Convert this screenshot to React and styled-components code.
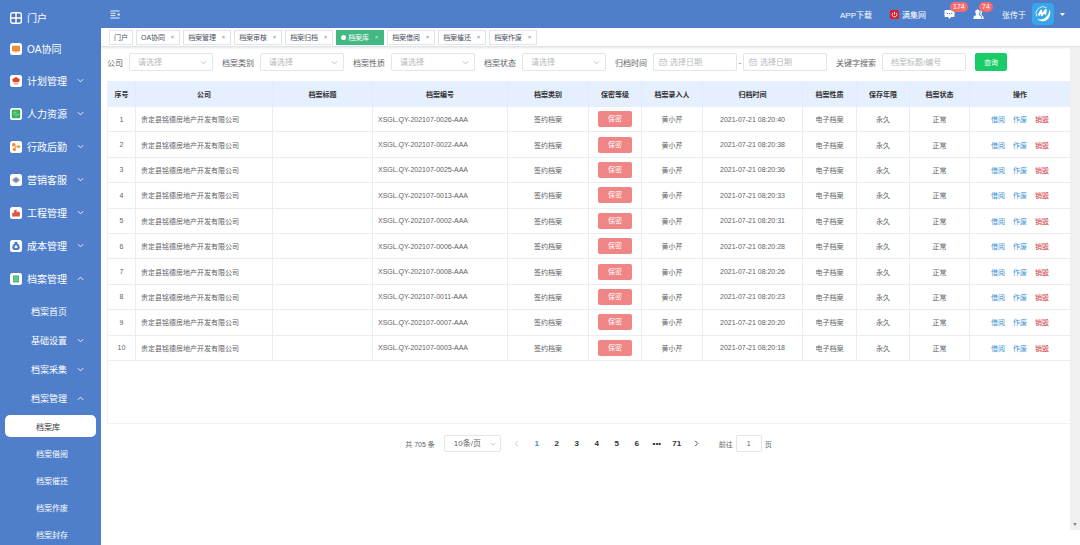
import { useState } from "react";
import styled, { createGlobalStyle } from "styled-components";

const GlobalStyle = createGlobalStyle`
  * {
    box-sizing: border-box;
    margin: 0;
    padding: 0;
  }

  body {
    font-family: "Liberation Sans", "Noto Sans CJK SC", sans-serif;
    font-size: 8px;
    color: #606266;
    background: #fff;
  }

  button, input, select {
    font: inherit;
    color: inherit;
  }

  a {
    color: inherit;
    text-decoration: none;
  }

  ul {
    list-style: none;
  }
`;

const menus = [
  { name: "门户", icon: "portal" },
  { name: "OA协同", icon: "oa" },
  { name: "计划管理", icon: "plan", children: true },
  { name: "人力资源", icon: "hr", children: true },
  { name: "行政后勤", icon: "admin", children: true },
  { name: "营销客服", icon: "sales", children: true },
  { name: "工程管理", icon: "project", children: true },
  { name: "成本管理", icon: "cost", children: true },
  { name: "档案管理", icon: "archive", children: true, open: true },
];

const subMenus = [
  { name: "档案首页" },
  { name: "基础设置", children: true },
  { name: "档案采集", children: true },
  { name: "档案管理", children: true, open: true },
];

const pages = ["档案库", "档案借阅", "档案催还", "档案作废", "档案封存"];

const tabs = [
  "门户",
  "OA协同",
  "档案管理",
  "档案审核",
  "档案归档",
  "档案库",
  "档案借阅",
  "档案催还",
  "档案作废",
];

const columns = [
  { title: "序号", width: 28 },
  { title: "公司", width: 137 },
  { title: "档案标题", width: 100 },
  { title: "档案编号", width: 135 },
  { title: "档案类别", width: 81 },
  { title: "保密等级", width: 53 },
  { title: "档案录入人", width: 61 },
  { title: "归档时间", width: 100 },
  { title: "档案性质", width: 54 },
  { title: "保存年限", width: 53 },
  { title: "档案状态", width: 60 },
  { title: "操作", width: 101 },
];

const rows = [
  ["0026", "40"],
  ["0022", "38"],
  ["0025", "36"],
  ["0013", "33"],
  ["0002", "31"],
  ["0006", "28"],
  ["0008", "26"],
  ["0011", "23"],
  ["0007", "20"],
  ["0003", "18"],
];

const menuArt = {
  oa: (
    <>
      <rect x="2" y="2.8" width="8" height="5.8" rx="1" fill="#f08c35" />
      <path d="M4.8 8.5h2.4L6 9.8z" fill="#f08c35" />
    </>
  ),
  plan: (
    <>
      <path d="M6 2 10 4.6 8.8 7H3.2L2 4.6z" fill="#e0452f" />
      <path d="M3.5 7.4h5v1.4L6 9.8 3.5 8.8z" fill="#f3a58f" />
    </>
  ),
  hr: (
    <>
      <rect x="1.8" y="1.8" width="8.4" height="8.4" rx="1" fill="#2fb55c" />
      <path d="M3.5 4.2h3M3.5 6h2M6 8.5c0-3 3-3 3-1" stroke="#a5ecbf" strokeWidth="0.8" fill="none" />
    </>
  ),
  admin: (
    <>
      <circle cx="3.8" cy="3.8" r="1.8" fill="#f08c35" />
      <circle cx="8.7" cy="5.6" r="1.6" fill="#f5a04a" />
      <circle cx="4.3" cy="8.4" r="1.6" fill="#f08c35" />
      <path d="M3.8 3.8 5.8 5.8 4.3 8.4M5.8 5.7h3" stroke="#f08c35" strokeWidth="0.9" fill="none" />
    </>
  ),
  sales: (
    <>
      <path d="M6 2.8 10.2 6 6 9.2 1.8 6z" fill="#9aa0b2" />
      <circle cx="6" cy="6" r="1.8" fill="#7d859c" />
    </>
  ),
  project: <path d="M2.2 9.5V5.8h1.9V3.6L6.6 2.2v3l2-.8 1.2 1.2v3.9z" fill="#e45340" />,
  cost: (
    <>
      <path d="M4.2 2h3.6l-.7 1.6c2 1 2.6 2.6 2.6 3.8C9.7 9.3 8.2 10 6 10S2.3 9.300 2.300 7.400c0-1.200.6-2.800 2.600-3.800z" fill="#3b78cf" />
      <circle cx="6" cy="6.8" r="1.5" fill="#fff" />
    </>
  ),
  archive: (
    <>
      <rect x="3" y="2.5" width="6" height="7" fill="#49b982" />
      <path d="M4.2 4.5h3.600M4.200 6h3.600M4.200 7.500h3.600" stroke="#a9e4c8" strokeWidth="0.5" />
    </>
  ),
};

function MenuIcon({ name }) {
  if (name === "portal") {
    return (
      <svg width="12" height="12" viewBox="0 0 12 12" aria-hidden="true">
        <rect x="0.7" y="0.7" width="10.6" height="10.6" rx="2" fill="#4a76bd" stroke="#fff" strokeWidth="1.4" />
        <path d="M6 1v10M1 6h10" stroke="#fff" strokeWidth="1.4" />
      </svg>
    );
  }
  return (
    <svg width="12" height="12" viewBox="0 0 12 12" aria-hidden="true">
      <rect width="12" height="12" rx="2.5" fill="#fff" />
      {menuArt[name]}
    </svg>
  );
}

function Arrow({ dir = "down", size = 7 }) {
  const d = {
    down: "M1 2.5 4 5.5 7 2.5",
    up: "M1 5.5 4 2.5 7 5.5",
    left: "M5.5 1 2.5 4 5.5 7",
    right: "M2.5 1 5.5 4 2.5 7",
  };
  return (
    <svg width={size} height={size} viewBox="0 0 8 8" fill="none" stroke="currentColor" aria-hidden="true">
      <path d={d[dir]} />
    </svg>
  );
}

function CalendarIcon() {
  return (
    <svg width="8" height="8" viewBox="0 0 8 8" fill="none" stroke="#b4b8c0" strokeWidth="0.7" aria-hidden="true">
      <path d="M0.8 1.3h6.400v6H0.800zM0.800 3.300h6.400M2.500 0.500v1.500M5.500 0.500v1.500M2.500 5.200h3" />
    </svg>
  );
}

function Sidebar() {
  return (
    <Side>
      <ul>
        {menus.map((item) => (
          <li key={item.name}>
            <MenuLink href="#" $tall={item.children}>
              <MenuIcon name={item.icon} />
              <span>{item.name}</span>
              {item.children && <Arrow dir={item.open ? "up" : "down"} />}
            </MenuLink>
          </li>
        ))}
      </ul>
      <SubMenu>
        {subMenus.map((item) => (
          <li key={item.name}>
            <SubLink href="#">
              <span>{item.name}</span>
              {item.children && <Arrow dir={item.open ? "up" : "down"} />}
            </SubLink>
          </li>
        ))}
      </SubMenu>
      <PageMenu>
        {pages.map((name) => (
          <li key={name}>
            <PageLink href="#" $active={name === "档案库"}>
              {name}
            </PageLink>
          </li>
        ))}
      </PageMenu>
    </Side>
  );
}

function Header() {
  return (
    <Navbar>
      <IconButton aria-label="收起菜单">
        <svg width="10" height="9" viewBox="0 0 10 9" stroke="#fff" fill="none">
          <path d="M0.5 1h9M0.500 3.300h5M0.500 5.600h5M0.500 8h9" strokeWidth="0.9" />
          <path d="M9.5 3 7 4.500 9.500 6z" fill="#fff" stroke="none" />
        </svg>
      </IconButton>
      <NavLinks>
        <a href="#">APP下载</a>
        <NavSite href="#">
          <svg width="9" height="9" viewBox="0 0 9 9" aria-hidden="true">
            <rect width="9" height="9" rx="1.5" fill="#d5202e" />
            <path d="M3 2.700a2.400 2.400 0 1 0 3 0M4.500 1.800v3" stroke="#fff" strokeWidth="0.8" fill="none" />
          </svg>
          满集网
        </NavSite>
        <Notice aria-label="消息 174">
          <svg width="11" height="11" viewBox="0 0 11 11">
            <path d="M1.5 1h8c.6 0 1 .4 1 1v5c0 .6-.4 1-1 1H7L5.500 10 4 8H1.500c-.6 0-1-.4-1-1V2c0-.6.4-1 1-1z" fill="#fff" />
            <path d="M2.700 4.500h1.200M4.900 4.500h1.200M7.100 4.500h1.200" stroke="#4f7fcb" strokeWidth="1.2" />
          </svg>
          <Badge>174</Badge>
        </Notice>
        <Notice aria-label="好友 74">
          <svg width="11" height="11" viewBox="0 0 11 11" fill="#fff">
            <path d="M4.500.5c1.500 0 2.300 1.100 2.200 2.600C6.600 4.400 6.100 5 5.800 5.600c0 1.200 2.700 1.300 2.700 3.400v1H.5V9c0-2.100 2.700-2.200 2.700-3.400C2.900 5 2.400 4.400 2.300 3.100 2.200 1.600 3 .5 4.500.5z" />
            <path d="M7.200 1c1.400 0 2 1 1.900 2.300C9 4.500 8.500 5 8.300 5.500c0 1.200 2.400 1.300 2.400 3.500v1H9.200V9c0-1.900-1.200-2.500-2.300-3.200.6-.9 1-3.300.3-4.800z" />
          </svg>
          <Badge>74</Badge>
        </Notice>
        <User>
          张传于
          <svg width="22" height="22" viewBox="0 0 22 22" aria-hidden="true">
            <rect width="22" height="22" rx="4" fill="#38a6e8" />
            <path d="M4.600 13.500A7 7 0 0 1 14.500 4.600" stroke="#d8f0fd" strokeWidth="1" fill="none" />
            <path d="M17.500 6.500C20 12 16.500 18 11 18.300 8.500 18.400 6.300 17.400 5.200 15.800c5 2 11.300-.8 12.300-9.300z" fill="#fff" />
            <path d="M6.500 12.500 9.200 7.500l.6 4.800 4-5.600-.5 5" stroke="#fff" strokeWidth="1.900" fill="none" strokeLinejoin="round" />
          </svg>
          <svg width="5" height="3" viewBox="0 0 5 3" fill="#fff" aria-hidden="true">
            <path d="M0 0h5L2.500 3z" />
          </svg>
        </User>
      </NavLinks>
    </Navbar>
  );
}

function Filters() {
  return (
    <FilterBar onSubmit={(e) => e.preventDefault()}>
      {["公司", "档案类别", "档案性质", "档案状态"].map((label) => (
        <Field key={label}>
          {label}
          <SelectBox>
            <select defaultValue="">
              <option value="">请选择</option>
            </select>
            <Arrow />
          </SelectBox>
        </Field>
      ))}
      <DateRange>
        <Field>
          归档时间
          <DateBox>
            <CalendarIcon />
            <input placeholder="选择日期" />
          </DateBox>
        </Field>
        <Dash>-</Dash>
        <DateBox>
          <CalendarIcon />
          <input placeholder="选择日期" aria-label="结束日期" />
        </DateBox>
      </DateRange>
      <Field>
        关键字搜索
        <KeywordBox>
          <input placeholder="档案标题/编号" />
        </KeywordBox>
      </Field>
      <SearchButton>查询</SearchButton>
    </FilterBar>
  );
}

function ArchiveTable() {
  return (
    <TableBox>
      <Table>
        <colgroup>
          {columns.map((c) => (
            <Col key={c.title} $width={c.width} />
          ))}
        </colgroup>
        <thead>
          <tr>
            {columns.map((c) => (
              <th key={c.title}>{c.title}</th>
            ))}
          </tr>
        </thead>
        <tbody>
          {rows.map(([code, second], i) => (
            <tr key={code}>
              <td>{i + 1}</td>
              <LeftCell>贵定县铭德房地产开发有限公司</LeftCell>
              <td></td>
              <LeftCell>XSGL.QY-202107-{code}-AAA</LeftCell>
              <td>签约档案</td>
              <td>
                <SecretTag>保密</SecretTag>
              </td>
              <td>黄小芹</td>
              <td>2021-07-21 08:20:{second}</td>
              <td>电子档案</td>
              <td>永久</td>
              <td>正常</td>
              <td>
                <Actions>
                  <Action href="#">借阅</Action>
                  <Action href="#">作废</Action>
                  <Action href="#" $danger>
                    销毁
                  </Action>
                </Actions>
              </td>
            </tr>
          ))}
        </tbody>
      </Table>
    </TableBox>
  );
}

function Pagination() {
  const [page, setPage] = useState(1);
  return (
    <Pager>
      <Total>共 705 条</Total>
      <SizeBox>
        <select aria-label="每页条数">
          <option>10条/页</option>
        </select>
        <Arrow size={6} />
      </SizeBox>
      <PageList>
        <PageButton aria-label="上一页" disabled={page === 1}>
          <Arrow dir="left" />
        </PageButton>
        {[1, 2, 3, 4, 5, 6].map((n) => (
          <PageButton key={n} $active={n === page} onClick={() => setPage(n)}>
            {n}
          </PageButton>
        ))}
        <PageButton aria-label="更多">•••</PageButton>
        <PageButton onClick={() => setPage(71)}>71</PageButton>
        <PageButton aria-label="下一页">
          <Arrow dir="right" />
        </PageButton>
      </PageList>
      <Jumper>
        前往
        <input defaultValue="1" />页
      </Jumper>
    </Pager>
  );
}

function App() {
  return (
    <Layout>
      <GlobalStyle />
      <Sidebar />
      <Main>
        <Header />
        <TabBar>
          {tabs.map((name) => (
            <Tab key={name} $active={name === "档案库"}>
              {name}
              {name !== "门户" && <i>×</i>}
            </Tab>
          ))}
        </TabBar>
        <Body>
          <Content>
            <Filters />
            <ArchiveTable />
            <Pagination />
          </Content>
          <ScrollTrack>
            <svg width="4" height="3" viewBox="0 0 4 3" fill="#8a8a8a" aria-hidden="true">
              <path d="M0 0h4L2 3z" />
            </svg>
          </ScrollTrack>
        </Body>
      </Main>
    </Layout>
  );
}

export default App;

const Layout = styled.div`
  display: flex;
  height: 100vh;
  overflow: hidden;
`;

const Side = styled.nav`
  flex: 0 0 101px;
  padding-top: 2px;
  overflow: hidden;
  background: #4f7fcb;
  color: #fff;
`;

const MenuLink = styled.a`
  display: flex;
  align-items: center;
  height: ${(p) => (p.$tall ? "33px" : "31px")};
  padding: 0 17px 0 10px;
  font-size: 10px;

  span {
    flex: 1;
    margin-left: 5px;
  }
`;

const SubMenu = styled.ul`
  padding-top: 2px;
`;

const SubLink = styled.a`
  display: flex;
  align-items: center;
  height: 29px;
  padding: 0 17px 0 31px;
  font-size: 9px;

  span {
    flex: 1;
  }
`;

const PageMenu = styled.ul`
  display: flex;
  flex-direction: column;
  gap: 5px;
  padding: 2px 5px 0;
`;

const PageLink = styled.a`
  display: flex;
  align-items: center;
  height: 22px;
  padding-left: 31px;
  border-radius: 5px;
  background: ${(p) => (p.$active ? "#fff" : "transparent")};
  color: ${(p) => (p.$active ? "#303133" : "#fff")};
`;

const Main = styled.div`
  flex: 1;
  min-width: 0;
  display: flex;
  flex-direction: column;
`;

const Navbar = styled.header`
  display: flex;
  align-items: center;
  justify-content: space-between;
  height: 28px;
  padding: 0 15px 0 9px;
  background: #4f7fcb;
  color: #fff;
`;

const IconButton = styled.button`
  display: flex;
  border: none;
  background: none;
  cursor: pointer;
`;

const NavLinks = styled.div`
  display: flex;
  align-items: center;
  gap: 18px;
`;

const NavSite = styled.a`
  display: flex;
  align-items: center;
  gap: 3px;
`;

const Notice = styled.button`
  position: relative;
  display: flex;
  border: none;
  background: none;
  cursor: pointer;
`;

const Badge = styled.span`
  position: absolute;
  left: 6px;
  top: -7px;
  padding: 0 3px;
  border-radius: 5px;
  background: #f56c6c;
  color: #fff;
  font-size: 7px;
  line-height: 10px;
`;

const User = styled.div`
  display: flex;
  align-items: center;
  gap: 6px;
`;

const TabBar = styled.div`
  display: flex;
  align-items: center;
  gap: 3px;
  height: 19px;
  padding-left: 8px;
  border-bottom: 1px solid #dfe2e8;
  box-shadow: 0 1px 2px rgba(0, 0, 0, 0.1);
`;

const Tab = styled.button`
  display: flex;
  align-items: center;
  gap: 5px;
  height: 15px;
  padding: 0 4px;
  border: 1px solid ${(p) => (p.$active ? "#42b983" : "#dfe3ea")};
  background: ${(p) => (p.$active ? "#42b983" : "#fff")};
  color: ${(p) => (p.$active ? "#fff" : "#495060")};
  font-size: 7px;
  cursor: pointer;

  &::before {
    content: "";
    display: ${(p) => (p.$active ? "block" : "none")};
    width: 5px;
    height: 5px;
    margin-right: -3px;
    border-radius: 50%;
    background: #fff;
  }

  i {
    width: 5px;
    font-size: 6px;
    font-style: normal;
    opacity: 0.7;
  }
`;

const Body = styled.div`
  flex: 1;
  display: flex;
  min-height: 0;
  padding-bottom: 15px;
`;

const Content = styled.main`
  flex: 1;
  min-width: 0;
  padding: 6px 0 0 6px;
`;

const ScrollTrack = styled.div`
  flex: 0 0 10px;
  display: flex;
  align-items: flex-end;
  justify-content: center;
  padding-bottom: 4px;
  background: #f0f0f0;
`;

const FilterBar = styled.form`
  display: flex;
  align-items: center;
  gap: 9px;
`;

const Field = styled.label`
  display: flex;
  align-items: center;
  gap: 6px;
  white-space: nowrap;
`;

const InputBox = styled.span`
  display: flex;
  align-items: center;
  width: 84px;
  height: 18px;
  border: 1px solid #e2e5ec;
  border-radius: 2px;
  background: #fff;

  input,
  select {
    flex: 1;
    width: 100%;
    min-width: 0;
    border: none;
    outline: none;
    background: none;
    appearance: none;
    color: #b4b8c0;
  }

  input::placeholder {
    color: #b4b8c0;
  }
`;

const SelectBox = styled(InputBox)`
  padding: 0 5px 0 8px;
  color: #b4b8c0;
`;

const DateBox = styled(InputBox)`
  gap: 3px;
  padding-left: 5px;
`;

const KeywordBox = styled(InputBox)`
  padding-left: 8px;
`;

const DateRange = styled.div`
  display: flex;
  align-items: center;
`;

const Dash = styled.span`
  width: 6px;
  text-align: center;
`;

const SearchButton = styled.button`
  width: 32px;
  height: 18px;
  border: none;
  border-radius: 2px;
  background: #18cc68;
  color: #fff;
  font-size: 7px;
  cursor: pointer;
`;

const TableBox = styled.div`
  min-height: 343px;
  margin-top: 10px;
  border: solid #f0f2f6;
  border-width: 0 0 1px 1px;
`;

const Table = styled.table`
  width: 100%;
  height: 280px;
  table-layout: fixed;
  border-collapse: separate;
  border-spacing: 0;
  font-size: 7px;
  text-align: center;

  th {
    height: 26px;
    background: #e6effd;
    color: #303133;
    font-weight: 700;
    border-right: 1px solid #e2ebfa;
  }

  td {
    border: solid #ebedf2;
    border-width: 0 1px 1px 0;
    white-space: nowrap;
  }
`;

const Col = styled.col`
  width: ${(p) => p.$width}px;
`;

const LeftCell = styled.td`
  padding-left: 5px;
  text-align: left;
`;

const SecretTag = styled.span`
  display: block;
  width: 34px;
  margin: 0 auto;
  border-radius: 2px;
  background: #f08585;
  color: #fff;
  line-height: 16px;
`;

const Actions = styled.div`
  display: flex;
  justify-content: center;
  gap: 8px;
`;

const Action = styled.a`
  color: ${(p) => (p.$danger ? "#d03440" : "#3d93d3")};
`;

const Pager = styled.div`
  display: flex;
  align-items: center;
  justify-content: center;
  margin-top: 11px;
`;

const Total = styled.span`
  font-size: 7px;
`;

const SizeBox = styled(InputBox)`
  width: 57px;
  height: 17px;
  margin: 0 6px 0 9px;
  padding: 0 4px 0 9px;
  color: #b4b8c0;

  select {
    color: #606266;
  }
`;

const PageList = styled.div`
  display: flex;
`;

const PageButton = styled.button`
  display: flex;
  align-items: center;
  justify-content: center;
  width: 20px;
  height: 17px;
  border: none;
  background: none;
  color: ${(p) => (p.$active ? "#3d93d3" : "#303133")};
  font-weight: 700;
  cursor: pointer;

  &:disabled {
    color: #c0c4cc;
  }
`;

const Jumper = styled.label`
  display: flex;
  align-items: center;
  gap: 3px;
  margin-left: 12px;
  font-size: 7px;

  input {
    width: 26px;
    height: 17px;
    border: 1px solid #e2e5ec;
    border-radius: 2px;
    text-align: center;
  }
`;
